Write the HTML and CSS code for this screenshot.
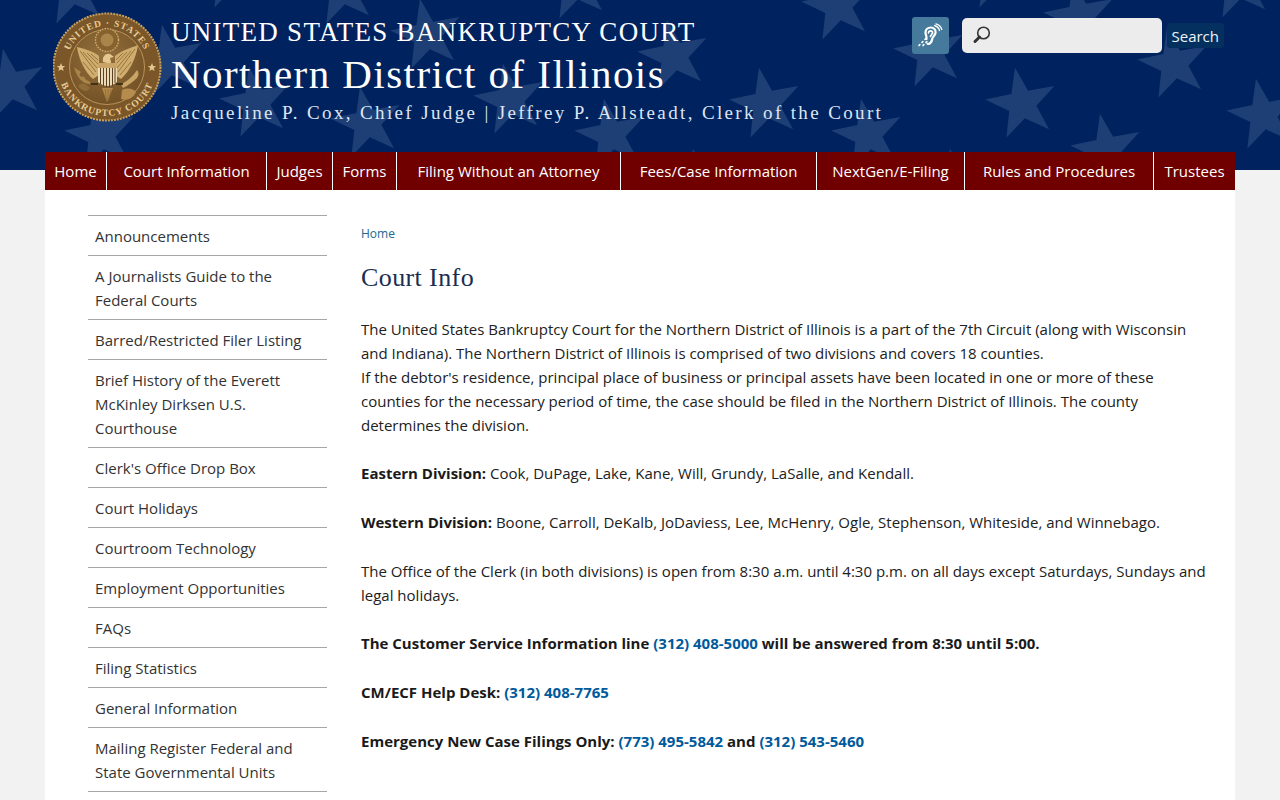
FILE: index.html
```html
<!DOCTYPE html>
<html lang="en">
<head>
    <meta charset="UTF-8">
    <title>Court Info | Northern District of Illinois</title>
    <link rel="stylesheet" href="styles.css">
</head>
<body>
    <header class="site-header">
        <svg class="stars" width="1280" height="170" viewBox="0 0 1280 170">
            <defs>
                <polygon id="star" points="0,-37 8.500,-11.800 35.200,-11.400 13.800,4.500 21.700,30 0,14.600 -21.700,30 -13.800,4.500 -35.200,-11.400 -8.500,-11.800" transform="rotate(-11)"/>
            </defs>
            <g fill="#1e3f76">
                <use href="#star" x="72" y="-10"/>
                <use href="#star" x="10" y="85"/>
                <use href="#star" x="101" y="135"/>
                <use href="#star" x="169" y="61"/>
                <use href="#star" x="230" y="-26"/>
                <use href="#star" x="256" y="103"/>
                <use href="#star" x="342" y="-10"/>
                <use href="#star" x="367" y="123"/>
                <use href="#star" x="427" y="35"/>
                <use href="#star" x="510" y="100"/>
                <use href="#star" x="575" y="-15"/>
                <use href="#star" x="611" y="135"/>
                <use href="#star" x="674" y="56"/>
                <use href="#star" x="700" y="185"/>
                <use href="#star" x="766" y="104"/>
                <use href="#star" x="838" y="6"/>
                <use href="#star" x="868" y="135"/>
                <use href="#star" x="930" y="53"/>
                <use href="#star" x="957" y="185"/>
                <use href="#star" x="995" y="-26"/>
                <use href="#star" x="1022" y="104"/>
                <use href="#star" x="1080" y="17"/>
                <use href="#star" x="1107" y="150"/>
                <use href="#star" x="1174" y="64"/>
                <use href="#star" x="1238" y="-16"/>
                <use href="#star" x="1263" y="115"/>
            </g>
        </svg>
        <div class="header-inner">
            <a class="seal" href="#">
                <svg width="110" height="110" viewBox="0 0 110 110">
                    <defs>
                        <radialGradient id="gold" cx="45%" cy="35%" r="75%">
                            <stop offset="0" stop-color="#94703c"/>
                            <stop offset="1" stop-color="#6e4d22"/>
                        </radialGradient>
                        <path id="ring-top" d="M 13 55 A 41 41 0 0 1 95 55"/>
                        <path id="ring-bottom" d="M 5 55 A 49 49 0 0 0 103 55"/>
                    </defs>
                    <circle cx="54" cy="55" r="53.500" fill="#7a5628" stroke="#c9a05a" stroke-width="2" stroke-dasharray="2 1"/>
                    <circle cx="54" cy="55" r="37.500" fill="url(#gold)" stroke="#b8935a" stroke-width="1"/>
                    <text class="seal-text"><textPath href="#ring-top" startOffset="50%" text-anchor="middle">UNITED · STATES</textPath></text>
                    <text class="seal-text"><textPath href="#ring-bottom" startOffset="50%" text-anchor="middle">BANKRUPTCY COURT</textPath></text>
                    <path class="seal-star" d="M8 51 l1.200 3 3 .2 -2.400 1.900 .9 3 -2.700 -1.700 -2.700 1.700 .9 -3 -2.400 -1.900 3 -.2 Z"/>
                    <path class="seal-star" d="M99 51 l1.200 3 3 .2 -2.400 1.900 .9 3 -2.700 -1.700 -2.700 1.700 .9 -3 -2.400 -1.900 3 -.2 Z"/>
                    <!-- crest -->
                    <circle cx="54" cy="28" r="11.500" fill="#86622f" stroke="#d2ae70" stroke-width="1.400" stroke-dasharray="1.500 1.200"/>
                    <circle cx="54" cy="28" r="6.500" fill="#a98549"/>
                    <!-- wings -->
                    <path class="wing" d="M24 35 C32 37 40 39 46 44 L46 63 L40 67 C32 60 26 48 24 35 Z"/>
                    <path class="wing" d="M85 33 C77 36 68 39 62 44 L62 63 L68 67 C76 60 83 47 85 33 Z"/>
                    <path class="feather" d="M27 39 L43 60 M30 40 L44 56 M34 41 L45 52 M38 42 L45 48 M30 50 L41 63"/>
                    <path class="feather" d="M82 37 L65 60 M78 39 L64 56 M74 40 L63 52 M70 41 L63 48 M78 50 L67 63"/>
                    <!-- head, shield, tail -->
                    <path d="M50 50 C49 44 53 41 57 42 L61 45 L57 46 C58 49 58 50 58 52 Z" fill="#e3c78f"/>
                    <rect x="45" y="51" width="19" height="5" fill="#c9a466"/>
                    <path d="M45 56 H64 V70 Q54.500 78 45 70 Z" fill="#eadbb6"/>
                    <path class="bars" d="M47.500 56v16M50.500 56v18M53.500 56v19M56.500 56v19M59.500 56v18M62 56v15"/>
                    <path d="M49 76 L54 90 L60 76 Z" fill="#b58c4e"/>
                    <path class="feather" d="M52 77 L53.500 88 M55 77 L55 88 M58 77 L56 88"/>
                    <!-- olive branch and arrows -->
                    <path d="M37 72 C30 72 24 66 21 55 C24 58 26 58 28 60 C24 64 30 66 31 64 C32 68 34 68 37 70 Z" fill="#a9854a"/>
                    <path d="M25 74 C28 69 33 72 37 76 C34 81 28 79 25 74 Z" fill="#8f6d38"/>
                    <path d="M68 72 C74 70 80 64 84 58 C86 60 86 63 84 66 C80 70 74 74 70 76 Z" fill="#c9a466"/>
                    <path d="M69 78 C75 75 81 77 83 80 C80 87 73 89 68 87 Z" fill="#b58c4e"/>
                    <path d="M38 72 H45 M63 72 H70" stroke="#2e2010" stroke-width="1.500"/>
                </svg>
            </a>
            <div class="titles">
                <div class="court-name">UNITED STATES BANKRUPTCY COURT</div>
                <div class="district">Northern District of Illinois</div>
                <div class="judges-line">Jacqueline P. Cox, Chief Judge | Jeffrey P. Allsteadt, Clerk of the Court</div>
            </div>
            <div class="header-tools">
                <a class="hearing" href="#" aria-label="Hearing assistance">
                    <svg width="26" height="26" viewBox="0 0 26 26" fill="none" stroke="#fff" stroke-linecap="round">
                        <path d="M9.500 16 C10 13.500 8.500 12 8.500 9.500 C8.500 6.500 11 4.500 13.800 4.500 C16.800 4.500 19 6.800 18.600 9.500 C18.200 12.500 15.800 13.500 15.200 16 C14.700 19 13 21.500 10.500 20.800" stroke-width="2.200"/>
                        <path d="M11.500 9.800 C11.500 7.800 14.500 7 15.500 9 C16.200 11 13.800 11.500 13.500 13.500" stroke-width="1.700"/>
                        <path d="M17.500 2.500 C20 3.200 21.800 5 22.500 7.500 M19 0.800 C22 1.800 24 3.800 24.800 6.500" stroke-width="1.300"/>
                        <path d="M2 22.500 l.8 -.8 M5 19.500 l.8 -.8 M8 16.500 l.8 -.8 M6 22.500 l.8 -.8 M9 19.500 l.8 -.8" stroke-width="1.700"/>
                    </svg>
                </a>
                <form class="search-form">
                    <div class="search-box">
                        <svg width="20" height="20" viewBox="0 0 20 20" fill="none">
                            <circle cx="11.500" cy="8" r="5.800" stroke="#333" stroke-width="1.600"/>
                            <path d="M7.500 12 L3 16.500" stroke="#333" stroke-width="3" stroke-linecap="round"/>
                        </svg>
                    </div>
                    <span class="search-btn">Search</span>
                </form>
            </div>
        </div>
    </header>

    <div class="page">
        <nav class="main-nav">
            <a href="#" class="w-home">Home</a>
            <a href="#" class="w-info">Court Information</a>
            <a href="#" class="w-judges">Judges</a>
            <a href="#" class="w-forms">Forms</a>
            <a href="#" class="w-filing">Filing Without an Attorney</a>
            <a href="#" class="w-fees">Fees/Case Information</a>
            <a href="#" class="w-next">NextGen/E-Filing</a>
            <a href="#" class="w-rules">Rules and Procedures</a>
            <a href="#" class="w-trustees">Trustees</a>
        </nav>

        <div class="columns">
            <aside class="side-nav">
                <a href="#">Announcements</a>
                <a href="#">A Journalists Guide to the Federal Courts</a>
                <a href="#">Barred/Restricted Filer Listing</a>
                <a href="#">Brief History of the Everett McKinley Dirksen U.S. Courthouse</a>
                <a href="#">Clerk's Office Drop Box</a>
                <a href="#">Court Holidays</a>
                <a href="#">Courtroom Technology</a>
                <a href="#">Employment Opportunities</a>
                <a href="#">FAQs</a>
                <a href="#">Filing Statistics</a>
                <a href="#">General Information</a>
                <a href="#">Mailing Register Federal and State Governmental Units</a>
            </aside>

            <main class="content">
                <div class="breadcrumb"><a href="#">Home</a></div>
                <h1>Court Info</h1>
                <p>The United States Bankruptcy Court for the Northern District of Illinois is a part of the 7th Circuit (along with Wisconsin and Indiana). The Northern District of Illinois is comprised of two divisions and covers 18 counties.<br>
                If the debtor's residence, principal place of business or principal assets have been located in one or more of these counties for the necessary period of time, the case should be filed in the Northern District of Illinois. The county determines the division.</p>
                <p><strong>Eastern Division:</strong> Cook, DuPage, Lake, Kane, Will, Grundy, LaSalle, and Kendall.</p>
                <p><strong>Western Division:</strong> Boone, Carroll, DeKalb, JoDaviess, Lee, McHenry, Ogle, Stephenson, Whiteside, and Winnebago.</p>
                <p>The Office of the Clerk (in both divisions) is open from 8:30 a.m. until 4:30 p.m. on all days except Saturdays, Sundays and legal holidays.</p>
                <p><strong>The Customer Service Information line <a href="#">(312) 408-5000</a> will be answered from 8:30 until 5:00.</strong></p>
                <p><strong>CM/ECF Help Desk: <a href="#">(312) 408-7765</a></strong></p>
                <p><strong>Emergency New Case Filings Only: <a href="#">(773) 495-5842</a> and <a href="#">(312) 543-5460</a></strong></p>
            </main>
        </div>
    </div>
</body>
</html>
```

FILE: styles.css
```css
* {
    box-sizing: border-box;
}

html, body {
    height: 800px;
    overflow: hidden;
}

body {
    margin: 0;
    background: #f2f2f2;
    font-family: "Open Sans", sans-serif;
    font-size: 15px;
    line-height: 24px;
    color: #212121;
}

a {
    text-decoration: none;
}

.site-header {
    position: relative;
    height: 170px;
    background: #00235f;
    overflow: hidden;
}

.stars {
    position: absolute;
    top: 0;
    left: 0;
}

.header-inner {
    position: relative;
    display: flex;
    width: 1190px;
    margin: 0 auto;
    padding: 12px 0 0 8px;
}

.seal {
    display: block;
    width: 110px;
    height: 110px;
    margin-right: 8px;
}

.seal-text {
    font-family: "Liberation Serif", serif;
    font-size: 9.500px;
    font-weight: bold;
    letter-spacing: 1px;
    fill: #e8cd96;
}

.seal-star {
    fill: #e3c78f;
}

.wing {
    fill: #cfad6e;
}

.feather {
    fill: none;
    stroke: #8a6630;
    stroke-width: 0.8;
}

.bars {
    fill: none;
    stroke: #5c4120;
    stroke-width: 1;
}

.titles {
    font-family: "Liberation Serif", serif;
    color: #fff;
    white-space: nowrap;
}

.court-name {
    font-size: 27px;
    line-height: 40px;
    letter-spacing: 1.270px;
}

.district {
    font-size: 41px;
    line-height: 44px;
    letter-spacing: 1.450px;
}

.judges-line {
    margin-top: 3px;
    font-size: 19px;
    line-height: 28px;
    letter-spacing: 2.365px;
    color: #dfe6f2;
}

.header-tools {
    display: flex;
    flex: 1;
    align-items: flex-start;
    justify-content: flex-end;
    padding-top: 5px;
    padding-right: 11px;
}

.hearing {
    display: flex;
    align-items: center;
    justify-content: center;
    width: 37px;
    height: 37px;
    margin-right: 13px;
    background: #457a9c;
    border-radius: 3px;
}

.search-form {
    display: flex;
    align-items: flex-start;
}

.search-box {
    width: 200px;
    height: 35px;
    margin-top: 1px;
    padding: 7px 0 0 10px;
    background: #ececec;
    border-radius: 5px;
}

.search-btn {
    height: 25px;
    margin: 6px 0 0 5px;
    padding: 0 5px;
    background: #04305f;
    border-radius: 3px;
    font-size: 15px;
    line-height: 26px;
    color: #eef3f8;
}

.page {
    width: 1190px;
    height: 700px;
    margin: -18px auto 0;
    position: relative;
    background: #fff;
}

.main-nav {
    display: flex;
    height: 38px;
    background: #700000;
}

.main-nav a {
    display: block;
    border-right: 1px solid #fff;
    font-size: 15px;
    line-height: 39px;
    text-align: center;
    color: #fff;
    white-space: nowrap;
}

.main-nav a:last-child {
    border-right: 0;
}

.w-home { width: 62px; }
.w-info { width: 160px; }
.w-judges { width: 66px; }
.w-forms { width: 64px; }
.w-filing { width: 224px; }
.w-fees { width: 196px; }
.w-next { width: 148px; }
.w-rules { width: 189px; }
.w-trustees { width: 81px; }

.columns {
    display: flex;
    padding: 25px 29px 0 43px;
}

.side-nav {
    flex: none;
    width: 239px;
    margin-right: 34px;
    border-top: 1px solid #a6a6a6;
}

.side-nav a {
    display: block;
    padding: 8px 7px 7px;
    border-bottom: 1px solid #a6a6a6;
    color: #333;
}

.content {
    flex: 1;
    min-width: 0;
}

.breadcrumb {
    padding-top: 10px;
    font-size: 12px;
    line-height: 18px;
}

.breadcrumb a {
    color: #22668f;
}

.content h1 {
    margin: 17px 0 20.800px;
    font-family: "Liberation Serif", serif;
    font-size: 26px;
    font-weight: normal;
    line-height: 36px;
    letter-spacing: 0.400px;
    color: #1a2f4f;
}

.content p {
    margin: 0 0 24.650px;
}

.content strong {
    color: #1a1a1a;
}

.content p a {
    color: #005a9c;
}
```
